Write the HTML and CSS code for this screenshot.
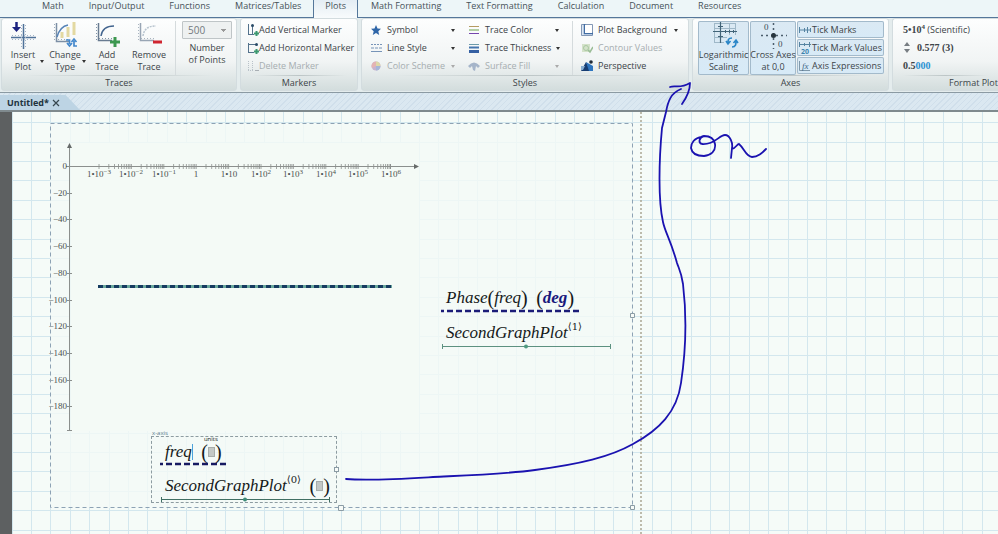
FILE: index.html
```html
<!DOCTYPE html>
<html lang="en">
<head>
<meta charset="utf-8">
<title>Untitled</title>
<link rel="stylesheet" href="styles.css">
</head>
<body>
<nav class="tabs" aria-label="Ribbon tabs">
  <button class="tab">Math</button>
  <button class="tab">Input/Output</button>
  <button class="tab">Functions</button>
  <button class="tab">Matrices/Tables</button>
  <button class="tab active">Plots</button>
  <button class="tab">Math Formatting</button>
  <button class="tab">Text Formatting</button>
  <button class="tab">Calculation</button>
  <button class="tab">Document</button>
  <button class="tab">Resources</button>
</nav>

<div class="ribbon">
  <section class="group">
    <div class="body traces">
      <button class="big drop">
        <svg width="30" height="28" viewBox="0 0 30 28"><path d="M3 16.500H28M15.500 3V28" stroke="#4f7299" stroke-width="1.500"/><path d="M4 14.500H28M13.500 4V28M17.500 4V28M4 18.500H28" stroke="#a3b5c8" stroke-dasharray="1 2"/><path d="M8.500 1V7" stroke="#1c2380" stroke-width="2.500"/><path d="M4 6H13L8.500 11Z" fill="#1c2380"/></svg>
        <span>Insert<br>Plot</span>
      </button>
      <button class="big drop">
        <svg width="30" height="28" viewBox="0 0 30 28"><path d="M6.500 2V20.500H20" fill="none" stroke="#7c8fa5" stroke-width="1.500"/><path d="M4.500 3V20M8 18.500H20" stroke="#9babbb" stroke-dasharray="1 2"/><path d="M12 17V11M18 16V6M24 14V1" stroke="#e3d9a2" stroke-width="3"/><path d="M7 16C9 9 12 5 18 4" fill="none" stroke="#5784b7" stroke-width="1.500"/><path d="M16 19H19.500V23M17 22L19.500 25L22 22M27 25H24V20M21.500 21L24 18L26.500 21" fill="none" stroke="#4488cc" stroke-width="1.700"/></svg>
        <span>Change<br>Type</span>
      </button>
      <button class="big">
        <svg width="30" height="28" viewBox="0 0 30 28"><path d="M6.500 2V19.500H20" fill="none" stroke="#687b91" stroke-width="1.500"/><path d="M4.500 3V19M7 17.500H20" stroke="#8194a8" stroke-dasharray="1 2"/><path d="M9 15C10 8 14 5 22 5" fill="none" stroke="#42648e" stroke-width="1.500"/><path d="M18 21H28M23 16V26" stroke="#3d9850" stroke-width="3"/></svg>
        <span>Add<br>Trace</span>
      </button>
      <button class="big">
        <svg width="30" height="28" viewBox="0 0 30 28"><path d="M6.500 2V19.500H20" fill="none" stroke="#98a5b4" stroke-width="1.500"/><path d="M4.500 3V19M7 17.500H20" stroke="#a9b4bf" stroke-dasharray="1 2"/><path d="M9 15C10 8 14 5 22 5" fill="none" stroke="#b7c3ce" stroke-width="1.500" stroke-dasharray="2 1"/><path d="M19 21H28" stroke="#cf2530" stroke-width="3"/></svg>
        <span>Remove<br>Trace</span>
      </button>
      <div class="points">
        <select id="points" disabled><option>500</option></select>
        <label for="points">Number<br>of Points</label>
      </div>
    </div>
    <h2>Traces</h2>
  </section>

  <section class="group">
    <div class="body markers">
      <button class="row"><svg width="12" height="14" viewBox="0 0 12 14"><path d="M1.500 1V12M1 11.500H7M5.500 2V11" stroke="#54728c" fill="none"/><circle cx="5.500" cy="2.500" r="1.500" fill="#284a66"/><path d="M7 10.500H12M9.500 8V13" stroke="#3d9870" stroke-width="2"/></svg>Add Vertical Marker</button>
      <button class="row"><svg width="12" height="14" viewBox="0 0 12 14"><path d="M1.500 2V12M1 11.500H7M2 3.500H10" stroke="#54728c" fill="none"/><circle cx="9.500" cy="3.500" r="1.500" fill="#284a66"/><path d="M7 10.500H12M9.500 8V13" stroke="#3d9870" stroke-width="2"/></svg>Add Horizontal Marker</button>
      <button class="row" disabled><svg width="12" height="14" viewBox="0 0 12 14"><path d="M1.500 2V12M1 11.500H7M5.500 2V11" stroke="#b9c2c9" stroke-dasharray="1 1" fill="none"/><path d="M8 11.500H12" stroke="#a9afb4" stroke-width="1"/></svg>Delete Marker</button>
    </div>
    <h2>Markers</h2>
  </section>

  <section class="group">
    <div class="body styles">
      <div class="stack">
        <button class="row menu"><svg width="12" height="12" viewBox="0 0 12 12"><path d="M6 1L7.500 4.500L11 4.800L8.300 7.300L9.200 11L6 9L2.800 11L3.700 7.300L1 4.800L4.500 4.500Z" fill="#2f66a8"/></svg><span>Symbol</span></button>
        <button class="row menu"><svg width="12" height="12" viewBox="0 0 12 12"><path d="M1 2.500H12" stroke="#7794b8" stroke-dasharray="2 1"/><path d="M1 6H12" stroke="#7794b8" stroke-dasharray="3 1"/><path d="M1 9.500H12" stroke="#7794b8"/></svg><span>Line Style</span></button>
        <button class="row menu" disabled><svg width="12" height="12" viewBox="0 0 12 12"><circle cx="6" cy="6" r="4.500" fill="#c7b3cf"/><path d="M6 6V1.500A4.500 4.500 0 0 1 10.500 6Z" fill="#ddd8a8"/><path d="M6 6L2 8A4.500 4.500 0 0 1 6 1.500Z" fill="#e4b3b3"/><path d="M6 6V10.500A4.500 4.500 0 0 0 10.500 6Z" fill="#a5b6d9"/></svg><span>Color Scheme</span></button>
      </div>
      <div class="stack">
        <button class="row menu"><svg width="12" height="12" viewBox="0 0 12 12"><path d="M1 2.500H11" stroke="#b59b62"/><path d="M1 6H11" stroke="#6aa24d"/><path d="M1 9.500H11" stroke="#7646ad"/></svg><span>Trace Color</span></button>
        <button class="row menu"><svg width="12" height="12" viewBox="0 0 12 12"><path d="M1 2.500H11" stroke="#6b9aaa"/><path d="M1 5.500H11" stroke="#4676ae" stroke-width="2"/><path d="M1 9.500H11" stroke="#3560a3" stroke-width="3"/></svg><span>Trace Thickness</span></button>
        <button class="row menu" disabled><svg width="12" height="12" viewBox="0 0 12 12"><path d="M0 6Q6 -1 12 6L10 8L8 6L7 11L5 10L4 6L2 8Z" fill="#a5b5ca"/></svg><span>Surface Fill</span></button>
      </div>
      <div class="stack wide">
        <button class="row menu"><svg width="12" height="14" viewBox="0 0 12 14"><path d="M.500 1.500H11.500V12.500H.500Z" fill="#dce7f3" stroke="#8398b6"/><path d="M3.500 1V10.500H12" fill="none" stroke="#426da3" stroke-width="1.500"/><path d="M4 2H11V10H4Z" fill="#fff"/></svg><span>Plot Background</span></button>
        <button class="row" disabled><svg width="12" height="12" viewBox="0 0 12 12"><path d="M1 2H9V10H1Z" fill="#d4e2ca"/><circle cx="5" cy="6" r="2.500" fill="none" stroke="#a9c8a1"/><path d="M7 8L9 10L12 5" fill="none" stroke="#9bbd97" stroke-width="1.500"/></svg><span>Contour Values</span></button>
        <button class="row"><svg width="12" height="12" viewBox="0 0 12 12"><path d="M0 11L5 2L10 11Z" fill="#173d72"/><path d="M5 2L12 6V11H8Z" fill="#2e75bf"/><path d="M0 6H4L2 10H0Z" fill="#88aed2"/><circle cx="10" cy="2" r="1.800" fill="#202a36"/></svg><span>Perspective</span></button>
      </div>
    </div>
    <h2>Styles</h2>
  </section>

  <section class="group">
    <div class="body axes">
      <button class="big on" aria-pressed="true">
        <svg width="30" height="28" viewBox="0 0 30 28"><path d="M5 2.500H27M5 7.500H27M5 16.500H18M5 21.500H15M5.500 2V22M20.500 2V14M26.500 2V14" stroke="#9fb8c8"/><path d="M4 10.500H28M11.500 1V22" stroke="#426478" stroke-width="1.200"/><path d="M9 5.500H14M9 15.500H14M16.500 9V12M20.500 9V12M24.500 9V12" stroke="#426478"/><path d="M23 17C19 17 19 19 19 22M17 20L19 23L21.500 20M23 26C27 26 27 23 27 20M24.500 22L27 19L29 22" fill="none" stroke="#2b86c7" stroke-width="1.600"/></svg>
        <span>Logarithmic<br>Scaling</span>
      </button>
      <button class="big on" aria-pressed="true">
        <svg width="30" height="28" viewBox="0 0 30 28"><path d="M15.500 2V28M3 14.500H29" stroke="#4b5e6c" stroke-width="1.500" stroke-dasharray="2 3"/><circle cx="15.500" cy="14.500" r="2.500" fill="#26343e"/><text x="6" y="9" class="zero">0</text><text x="20" y="26" class="zero">0</text></svg>
        <span>Cross Axes<br>at 0,0</span>
      </button>
      <div class="stack toggles">
        <button class="row on" aria-pressed="true"><svg width="14" height="12" viewBox="0 0 14 12"><path d="M1 6H13M1.500 3V9M6.500 4V8M9.500 3V9M12.500 4V8" stroke="#5684a2"/></svg>Tick Marks</button>
        <button class="row on" aria-pressed="true"><svg width="14" height="14" viewBox="0 0 14 14"><path d="M1 3.500H13M1.500 1V6M6.500 2V5M11.500 1V6" stroke="#5684a2"/><text x="3" y="13" class="twenty">20</text></svg>Tick Mark Values</button>
        <button class="row on" aria-pressed="true"><svg width="14" height="14" viewBox="0 0 14 14"><path d="M1.500 2V11.500H12" fill="none" stroke="#7f98aa"/><text x="4" y="10" class="fx">fx</text></svg>Axis Expressions</button>
      </div>
    </div>
    <h2>Axes</h2>
  </section>

  <section class="group last">
    <div class="body format">
      <button class="row"><b class="num">5•10<sup>4</sup></b>&nbsp;(Scientific)</button>
      <button class="row"><svg width="8" height="14" viewBox="0 0 8 14"><path d="M1 5L4 1L7 5ZM1 8H7L4 12Z" fill="#777d82"/></svg><b class="num indent">0.577 (3)</b></button>
      <button class="row"><b class="num">0.5<i>000</i></b></button>
    </div>
    <h2>Format Plot</h2>
  </section>
</div>

<div class="documents">
  <div class="doc"><span>Untitled*</span><button aria-label="Close"><svg width="8" height="8" viewBox="0 0 8 8"><path d="M1 1L7 7M7 1L1 7" stroke="#37474f" stroke-width="1.200"/></svg></button></div>
</div>

<main class="sheet">
  <svg class="paper" width="100%" height="100%">
    <defs><pattern id="squares" x="19" y="10" width="97" height="97" patternUnits="userSpaceOnUse"><path d="M.500 0V97M19.500 0V97M39.500 0V97M58.500 0V97M78.500 0V97M0 .500H97M0 20.500H97M0 39.500H97M0 58.500H97M0 78.500H97" stroke="#d3e7ee"/></pattern></defs>
    <rect width="100%" height="100%" fill="url(#squares)"/>
    <path d="M629 0V600" stroke="#aba793" stroke-width="1.500" stroke-dasharray="2 2"/>
  </svg>

  <div class="plot">
    <svg class="chart" width="583" height="385" viewBox="50 123 583 385">
      <defs><path id="decade" d="M0 -2.500V2.500M9.800 -2.500V2.500M15.500 -2.500V2.500M19.500 -2.500V2.500M22.600 -2.500V2.500M25.200 -2.500V2.500M27.400 -2.500V2.500M29.300 -2.500V2.500M30.900 -2.500V2.500" stroke-width="0.800"/></defs>
      <rect x="71" y="143" width="348" height="288" fill="#f4faf6"/>
      <g stroke="#8b8f8d" fill="none">
        <path d="M69.500 147V430.500M67 430.500H72M66 166.500H415"/>
        <path d="M67 193.500H72M67 219.500H72M67 246.500H72M67 273.500H72M67 300.500H72M67 326.500H72M67 353.500H72M67 380.500H72M67 406.500H72"/>
        <use href="#decade" x="99" y="166.500"/><use href="#decade" x="131.400" y="166.500"/><use href="#decade" x="163.800" y="166.500"/><use href="#decade" x="196.200" y="166.500"/><use href="#decade" x="228.600" y="166.500"/><use href="#decade" x="261" y="166.500"/><use href="#decade" x="293.400" y="166.500"/><use href="#decade" x="325.800" y="166.500"/><use href="#decade" x="358.200" y="166.500"/><path d="M390.500 164V169"/>
      </g>
      <path d="M67 148L69.500 143L72 148ZM414 164L419 166.500L414 169Z" fill="#666a69"/>
      <g class="labels" text-anchor="end">
        <text x="67" y="169">0</text><text x="67" y="196">−20</text><text x="67" y="222">−40</text><text x="67" y="249">−60</text><text x="67" y="276">−80</text><text x="67" y="303">−100</text><text x="67" y="329">−120</text><text x="67" y="356">−140</text><text x="67" y="383">−160</text><text x="67" y="409">−180</text>
      </g>
      <g class="labels" text-anchor="middle">
        <text x="99" y="177">1•10<tspan class="exp" dy="-3">−3</tspan></text><text x="131" y="177">1•10<tspan class="exp" dy="-3">−2</tspan></text><text x="164" y="177">1•10<tspan class="exp" dy="-3">−1</tspan></text><text x="196" y="177">1</text><text x="229" y="177">1•10</text><text x="261" y="177">1•10<tspan class="exp" dy="-3">2</tspan></text><text x="293" y="177">1•10<tspan class="exp" dy="-3">3</tspan></text><text x="326" y="177">1•10<tspan class="exp" dy="-3">4</tspan></text><text x="358" y="177">1•10<tspan class="exp" dy="-3">5</tspan></text><text x="391" y="177">1•10<tspan class="exp" dy="-3">6</tspan></text>
      </g>
      <path d="M98 286.500H392" stroke="#6aa89c" stroke-width="3"/>
      <path d="M98 286.500H392" stroke="#153b60" stroke-width="3" stroke-dasharray="5 3"/>
      <path d="M50.500 123.500H632.500V507.500H50.500Z" fill="none" stroke="#8da2b4" stroke-dasharray="4 3"/>
      <path d="M630.500 313.500H634.500V317.500H630.500ZM338.500 505.500H343.500V510.500H338.500ZM630.500 505.500H634.500V509.500H630.500Z" fill="#f7fbf8" stroke="#8b9ca5"/>
    </svg>
    <div class="legend">
      <div class="expr">Phase<s>(</s>freq<s>)</s>&nbsp; <s>(</s><b>deg</b><s>)</s></div>
      <svg class="key" height="4" width="140"><path d="M0 2H140" stroke="#1b1c78" stroke-width="2.500" stroke-dasharray="6 3" stroke-dashoffset="3"/></svg>
      <div class="expr">SecondGraphPlot<sup>⟨1⟩</sup></div>
      <svg class="key" height="6" width="171"><path d="M1 2.500H170M1.500 0V5M169.500 0V5" stroke="#5c9180"/><circle cx="85" cy="2.500" r="2" fill="#4f9a80"/></svg>
    </div>
    <div class="x-axis">
      <small class="caption">x-axis</small>
      <div class="expr">freq<span class="caret"></span>&nbsp; <s>(</s><span class="slot"><small>units</small></span><s>)</s></div>
      <svg class="key" height="4" width="67"><path d="M0 2H67" stroke="#171a62" stroke-width="2.500" stroke-dasharray="6 3" stroke-dashoffset="3"/></svg>
      <div class="expr">SecondGraphPlot<sup>⟨0⟩</sup>&nbsp; <s>(</s><span class="slot"></span><s>)</s></div>
      <svg class="key" height="6" width="171"><path d="M1 3.500H170M1.500 1V6M169.500 1V6" stroke="#406f63"/><circle cx="85" cy="3.500" r="2" fill="#3d8c78"/></svg>
      <i class="grip"></i>
    </div>
  </div>
</main>

<svg class="ink" width="998" height="534" viewBox="0 0 998 534" aria-hidden="true">
  <path d="M346 479C370 481 400 479 433 477C475 475 505 474 535 470C580 464 610 457 633 444C659 430 677 412 681 383C686 350 687 318 683 284C681 271 679 269 677 263C671 241 665 232 663 222C658 200 659 160 662 128L666 112C668 101 671 93 681 89"/>
  <path d="M670 87C675 85 680 89 690 83C690 90 687 97 682 104"/>
  <path d="M702 137C694 138 691 143 691 148C692 154 697 156 704 156C711 155 716 151 715 144C714 138 709 136 704 136C699 137 698 143 702 144C715 145 719 135 725 135C730 135 733 143 732 148L731 158M732 149C736 148 737 144 739 144C744 148 746 157 752 157C758 157 762 153 766 149"/>
</svg>
</body>
</html>
```
FILE: styles.css
```css
* { box-sizing: border-box; }
body {
  margin: 0;
  height: 100vh;
  display: flex;
  flex-direction: column;
  overflow: hidden;
  position: relative;
  background: #eaf3f4;
  color: #3c4448;
  font: 9px/12px "Open Sans", sans-serif;
}
button {
  margin: 0;
  padding: 0;
  border: 0;
  background: none;
  color: inherit;
  font: inherit;
}
button svg { flex: none; }

.tabs {
  flex: none;
  display: flex;
  height: 18px;
  padding-left: 29px;
  border-bottom: 1px solid #55779a;
  background: #edf6f8;
}
.tab {
  flex: none;
  padding: 0 12px 6px 13px;
  color: #465258;
  white-space: nowrap;
}
.tab.active {
  height: 18px;
  padding: 0 11px 6px;
  border: solid #55779a;
  border-width: 0 1px;
  background: linear-gradient(#e4edf4, #f8fbfc);
}

.ribbon {
  flex: none;
  display: grid;
  grid-template-columns: 236px 118px 328px 197px 1fr;
  gap: 3px;
  padding: 0 0 1px 1px;
  background: #e4eced;
  border-bottom: 1px solid #8b9aa3;
}
.group {
  min-width: 0;
  border: 1px solid #d3dcdf;
  border-radius: 3px;
  background: linear-gradient(#fdfefe, #f1f4f4 60%, #d3dddd);
}
.group h2 {
  margin: 0;
  font: inherit;
  text-align: center;
  line-height: 14px;
  border-top: 1px solid;
  border-image: linear-gradient(90deg, transparent 10%, #bcc5c6 50%, transparent 90%) 1;
}
.group.last { border-right: 0; border-radius: 3px 0 0 3px; }
.last h2 { text-align: right; }
.body { height: 56px; padding-top: 2px; display: flex; }
.stack, .markers, .format { display: flex; flex-direction: column; }
.row {
  display: flex;
  align-items: center;
  height: 18px;
  white-space: nowrap;
  text-align: left;
}
.row:disabled { color: #a6adb0; }
.big {
  display: flex;
  flex-direction: column;
  align-items: center;
  width: 42px;
  position: relative;
  white-space: nowrap;
}
.drop::after {
  content: "";
  position: absolute;
  right: 0;
  bottom: 12px;
  border: solid transparent;
  border-width: 3px 2px 0;
  border-top-color: #333;
}
.points {
  margin-left: 5px;
  padding-left: 6px;
  border-left: 1px solid #d5dbdd;
  text-align: center;
}
.points select {
  display: block;
  width: 50px;
  height: 18px;
  margin-bottom: 3px;
  padding: 0 5px;
  appearance: none;
  border: 1px solid #bfc5c7;
  border-radius: 1px;
  color: #737a7d;
  font: 10px "Open Sans", sans-serif;
  opacity: 1;
  background:
    linear-gradient(#999, #999) no-repeat 38px 7px / 5px 1px,
    linear-gradient(#999, #999) no-repeat 39px 8px / 3px 1px,
    linear-gradient(#999, #999) no-repeat 40px 9px / 1px 1px,
    #eef1f1;
}
.markers { padding-left: 6px; }

.menu::after {
  content: "";
  margin-left: auto;
  border: solid transparent;
  border-width: 3px 2px 0;
  border-top-color: #333;
}
.menu:disabled::after { border-top-color: #aaa; }
.styles { padding-left: 8px; gap: 13px; }
.styles .row { width: 85px; gap: 5px; }
.styles .stack:nth-child(2) .row { width: 91px; }
.styles .stack.wide { padding-left: 8px; border-left: 1px solid #d5dbdd; }
.styles .wide .row { width: 97px; }

.axes { padding-left: 5px; gap: 1px; }
.axes .big { width: 51px; height: 54px; }
.axes .big:nth-child(2) { width: 46px; }
.on {
  border-radius: 2px;
  background: linear-gradient(#dbe9f3, #d7eaf7);
  box-shadow: inset 0 0 0 1px #a3bacb;
}
.toggles { gap: 1px; }
.toggles .row { width: 87px; height: 17px; padding-left: 1px; }
.zero { font: 9px "Liberation Serif", serif; fill: #3c4b55; }
.twenty { font: bold 7px "Open Sans", sans-serif; fill: #3d83ad; }
.fx { font: italic 9px "Liberation Serif", serif; fill: #3e6687; }
.format { padding-left: 10px; }
.num { font: bold 10px/12px "Liberation Serif", serif; }
.num i { font-style: normal; color: #2b92d3; }
.num sup { font-size: 7px; line-height: 0; }
.indent { margin-left: 6px; }

.documents {
  flex: none;
  display: flex;
  height: 19px;
  padding-top: 2px;
  border-bottom: 2px solid #7f8a8e;
  background: repeating-linear-gradient(135deg, #dbe8f1 0 3px, #d0dfeb 3px 4px);
}
.doc {
  display: flex;
  align-items: center;
  gap: 3px;
  width: 80px;
  padding-left: 7px;
  background: #bdd4e4;
  clip-path: polygon(0 0, 82% 0, 100% 100%, 0 100%);
  color: #22333e;
  font-weight: 700;
}
.doc button { display: flex; }

.sheet {
  flex: 1;
  min-height: 0;
  position: relative;
  border-left: 12px solid #5d6061;
  background: #f5fbf8;
}
.paper { display: block; }
.plot {
  position: absolute;
  left: 38px;
  top: 11px;
  background: #f4faf6cc;
}
.chart { display: block; overflow: visible; }
.labels { font: 9px "Liberation Serif", serif; fill: #4c5250; }
.exp { font-size: 7px; }

.expr {
  display: flex;
  align-items: center;
  height: 22px;
  padding-left: 5px;
  color: #15191a;
  font: italic 17px/22px "Liberation Serif", serif;
  white-space: pre;
}
.expr s { font-style: normal; text-decoration: none; font-size: 20px; }
.expr sup { font: 10px/10px "DejaVu Serif", serif; align-self: flex-start; }
.expr b { color: #18187c; }
.key { display: block; }
.legend { position: absolute; left: 391px; top: 164px; }
.legend .key { margin: 0 0 9px; }
.x-axis {
  position: absolute;
  left: 101px;
  top: 313px;
  width: 186px;
  padding: 4px 0 0 8px;
  border: 1px dashed #8d9ca1;
}
.x-axis .expr { height: 21px; }
.x-axis .key { margin: 0 0 9px; }
.x-axis .key:nth-of-type(2) { margin-bottom: 0; }
.caption { position: absolute; left: 0; top: -8px; font: 6px/8px "Open Sans", sans-serif; color: #5b7d8c; }
.caret { width: 1px; height: 16px; background: #4da3dc; }
.slot { position: relative; width: 7px; height: 10px; background: #c3c8c6; border: 1px solid #a7adab; }
.slot small { position: absolute; left: -5px; top: -13px; font: 6px/8px "Open Sans", sans-serif; }
.grip {
  position: absolute;
  right: -3px;
  top: 30px;
  width: 5px;
  height: 5px;
  border: 1px solid #8b9ca5;
  background: #f7fbf8;
}

.ink {
  position: absolute;
  left: 0;
  top: 0;
  pointer-events: none;
  fill: none;
  stroke: #1a12b0;
  stroke-width: 1.8px;
  stroke-linecap: round;
  stroke-linejoin: round;
}
```
